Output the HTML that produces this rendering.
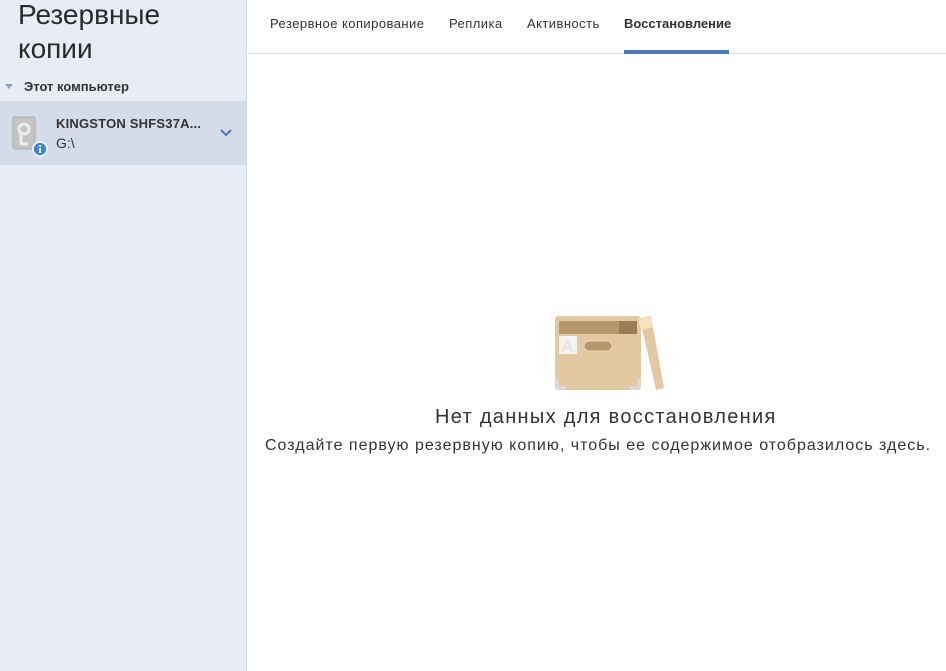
<!DOCTYPE html><html><head><meta charset="utf-8"><style>
body{margin:0;width:946px;height:671px;overflow:hidden;background:#fff;font-family:"Liberation Sans",sans-serif;position:relative}
.sb{position:absolute;left:0;top:0;width:246px;height:671px;background:#e7ecf5;border-right:1px solid #d6dce6}
.t{position:absolute;left:18px;top:-2px;font-size:28px;line-height:34px;color:#2a2a2a}
.pc{position:absolute;left:24px;top:79px;font-size:13px;font-weight:bold;color:#333}
.tri{position:absolute;left:5px;top:84px;width:0;height:0;border-left:4px solid transparent;border-right:4px solid transparent;border-top:5px solid #8aa0c8}
.sel{position:absolute;left:0;top:101px;width:246px;height:64px;background:#d4dcea}
.n1{position:absolute;left:56px;top:116px;font-size:13px;font-weight:bold;color:#333;letter-spacing:0.2px}
.n2{position:absolute;left:56px;top:135px;font-size:14px;color:#333}
.tabs span{position:absolute;top:16px;font-size:13px;color:#333;letter-spacing:0.45px}
.line{position:absolute;left:247px;top:53px;width:699px;height:1px;background:#d3deea}
.ul{position:absolute;left:624px;top:50px;width:105px;height:4px;background:#4a78bd}
</style></head><body>
<div class="sb">
<div class="t">Резервные<br>копии</div>
<div class="tri"></div><div class="pc">Этот компьютер</div>
<div class="sel"></div>
<svg style="position:absolute;left:12px;top:116px" width="36" height="42"><rect x="1" y="1" width="22" height="32" rx="2" fill="#c4c4c4" stroke="#aaa"/><circle cx="12" cy="13" r="5" fill="none" stroke="#eee" stroke-width="3"/><path d="M9 18 L9 28 L16 28" fill="none" stroke="#eee" stroke-width="3"/><circle cx="28" cy="33" r="7" fill="#3b87d8" stroke="#fff" stroke-width="1.5"/><rect x="27" y="32" width="2" height="5" fill="#fff"/><rect x="27" y="29" width="2" height="2" fill="#fff"/></svg>
<div class="n1">KINGSTON SHFS37A...</div><div class="n2">G:\</div>
<svg style="position:absolute;left:220px;top:129px" width="12" height="8"><path d="M1 1 L6 6 L11 1" fill="none" stroke="#4a78bd" stroke-width="2"/></svg>
</div>
<div class="tabs"><span style="left:270px">Резервное копирование</span><span style="left:449px">Реплика</span><span style="left:527px">Активность</span><span style="left:624px;font-weight:bold;letter-spacing:0">Восстановление</span></div>
<div class="line"></div><div class="ul"></div>
<svg style="position:absolute;left:552px;top:313px" width="116" height="80">
<rect x="3" y="3" width="86" height="74" rx="3" fill="#e2c9a2"/>
<rect x="7" y="8" width="78" height="13" fill="#b8966c"/>
<rect x="67" y="8" width="18" height="13" fill="#9e7d56"/>
<rect x="7" y="23" width="18" height="18" fill="#f3f3f3"/>
<text x="10" y="39" font-size="16" fill="#ddd" font-family="Liberation Sans">A</text>
<rect x="32" y="28" width="28" height="10" rx="5" fill="#b8966c" stroke="#ecd7b4"/>
<path d="M5 66 V75 H14" fill="none" stroke="#ddd" stroke-width="3"/><path d="M87 66 V75 H78" fill="none" stroke="#ddd" stroke-width="3"/>
<path d="M88 6 L99 3 L112 75 L104 77 Z" fill="#e2c9a2"/><path d="M86 6 L99 2 L101 14 L89 17Z" fill="#f6e1bf"/>
</svg>
<div style="position:absolute;left:435px;top:406px;font-size:20px;color:#333;letter-spacing:1.3px;white-space:nowrap">Нет данных для восстановления</div>
<div style="position:absolute;left:265px;top:437px;font-size:16px;color:#333;letter-spacing:1px;white-space:nowrap">Создайте первую резервную копию, чтобы ее содержимое отобразилось здесь.</div>
</body></html>
